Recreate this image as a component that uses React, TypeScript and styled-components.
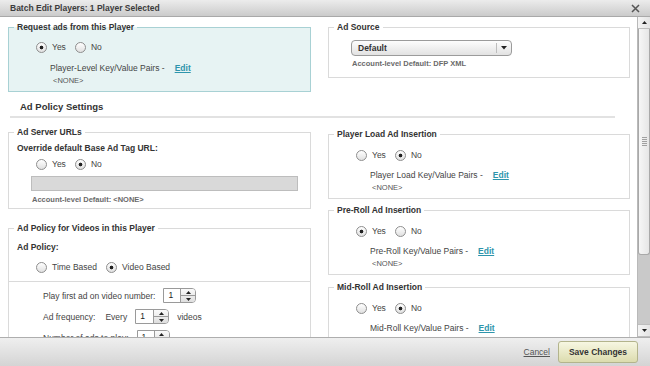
import styled, { createGlobalStyle } from "styled-components";

const GlobalStyle = createGlobalStyle`
  html, body {
    margin: 0;
    padding: 0;
  }
  body {
    font-family: "Liberation Sans", Arial, sans-serif;
    color: #333;
    background: #fff;
    overflow: hidden;
  }
  * {
    box-sizing: border-box;
  }
`;

const Dialog = styled.div`
  width: 650px;
  height: 366px;
  display: flex;
  flex-direction: column;
  overflow: hidden;
`;

const TitleBar = styled.header`
  height: 17px;
  flex: none;
  display: flex;
  align-items: center;
  justify-content: space-between;
  padding: 0 10px 0 10px;
  background: linear-gradient(#ececec, #cbcbcb);
  border-bottom: 1px solid #a9a9a9;
  font-size: 8.5px;
  font-weight: bold;
  color: #3c3c3c;
`;

const Body = styled.div`
  flex: 1;
  display: flex;
  min-height: 0;
`;

const Content = styled.div`
  flex: 1;
  overflow: hidden;
  padding: 5px 7px 0 8px;
`;

const Columns = styled.div`
  display: grid;
  grid-template-columns: 303px 302px;
  column-gap: 17px;
  align-items: start;
`;

const Stack = styled.div<{ $pt?: number }>`
  display: flex;
  flex-direction: column;
  padding-top: ${(p) => p.$pt ?? 0}px;
`;

const Box = styled.fieldset<{ $tint?: boolean; $pb?: number; $mt?: number }>`
  margin: ${(p) => p.$mt ?? 0}px 0 0;
  min-width: 0;
  padding: 0 8px ${(p) => p.$pb ?? 5}px;
  border: 1px solid ${(p) => (p.$tint ? "#a8d1d4" : "#dadada")};
  background: ${(p) => (p.$tint ? "#e7f3f3" : "#fff")};
`;

const Legend = styled.legend`
  margin-left: -3px;
  padding: 0 3px;
  font-size: 8.5px;
  font-weight: bold;
  line-height: 11px;
  color: #333;
`;

const SectionHeading = styled.h2`
  margin: 9px 15px 0 2px;
  padding: 0 0 3px 10px;
  border-bottom: 2px solid #e2e2e2;
  font-size: 9.5px;
  line-height: 12px;
  font-weight: bold;
  color: #333;
`;

const RadioRow = styled.div<{ $mt: number; $indent?: number }>`
  display: flex;
  align-items: center;
  height: 12px;
  margin-top: ${(p) => p.$mt}px;
  padding-left: ${(p) => p.$indent ?? 19}px;
  gap: 9px;
`;

const RadioOption = styled.label`
  display: inline-flex;
  align-items: center;
  gap: 5px;
  font-size: 8.5px;
  color: #444;
`;

const RadioDot = styled.span<{ $on?: boolean }>`
  width: 11px;
  height: 11px;
  border-radius: 50%;
  border: 1px solid #8e8e8e;
  background: ${(p) =>
    p.$on
      ? "radial-gradient(circle, #222 0 1.5px, transparent 2.2px), linear-gradient(#ffffff, #e0e0e0)"
      : "linear-gradient(#ffffff, #e0e0e0)"};
`;

const KvLine = styled.div<{ $mt: number }>`
  margin-top: ${(p) => p.$mt}px;
  padding-left: 33px;
  font-size: 8.5px;
  line-height: 12px;
  color: #444;
`;

const EditLink = styled.a`
  margin-left: 10px;
  font-weight: bold;
  color: #2e95ac;
  text-decoration: underline;
  cursor: pointer;
`;

const NoneText = styled.div<{ $indent?: number }>`
  margin-top: 2px;
  padding-left: ${(p) => p.$indent ?? 36}px;
  font-size: 7.5px;
  line-height: 10px;
  color: #555;
`;

const DefaultNote = styled.div<{ $mt: number }>`
  margin-top: ${(p) => p.$mt}px;
  padding-left: 15px;
  font-size: 7.5px;
  line-height: 10px;
  font-weight: bold;
  color: #6a6a6a;
`;

const FieldLabel = styled.div<{ $mt: number }>`
  margin-top: ${(p) => p.$mt}px;
  font-size: 8.5px;
  line-height: 12px;
  font-weight: bold;
  color: #333;
`;

const Select = styled.div`
  margin: 7px 0 0 14px;
  width: 161px;
  height: 16px;
  display: flex;
  align-items: center;
  padding-left: 6px;
  border: 1px solid #9b9b9b;
  border-radius: 4px;
  background: linear-gradient(#fdfdfd, #e2e2e2);
  font-size: 8.5px;
  font-weight: bold;
  color: #333;
`;

const SelectValue = styled.span`
  flex: 1;
`;

const SelectArrow = styled.span`
  width: 15px;
  height: 10px;
  display: flex;
  align-items: center;
  justify-content: center;
  border-left: 1px solid #bdbdbd;
`;

const UrlInput = styled.div`
  margin: 6px 0 0 14px;
  width: 267px;
  height: 15px;
  background: #d9d9d9;
  border: 1px solid #bdbdbd;
`;

const SubSection = styled.div`
  margin: 8px -9px 0;
  padding: 0 9px 0 35px;
  border-top: 1px solid #dadada;
`;

const ParamRow = styled.div<{ $mt: number }>`
  display: flex;
  align-items: center;
  gap: 8px;
  height: 15px;
  margin-top: ${(p) => p.$mt}px;
  font-size: 8.5px;
  color: #444;
`;

const Spinner = styled.div<{ $w: number }>`
  display: flex;
  width: ${(p) => p.$w}px;
  height: 15px;
  border: 1px solid #9a9a9a;
  border-radius: 0 4px 4px 0;
  background: #fff;
`;

const SpinnerValue = styled.span`
  flex: 1;
  padding-left: 4px;
  font-size: 8.5px;
  line-height: 13px;
  color: #222;
`;

const SpinnerButtons = styled.span`
  width: 15px;
  display: flex;
  flex-direction: column;
  border-left: 1px solid #9a9a9a;
  border-radius: 0 3px 3px 0;
  background: linear-gradient(#fafafa, #dedede);
`;

const SpinnerHalf = styled.span<{ $top?: boolean }>`
  flex: 1;
  display: flex;
  align-items: center;
  justify-content: center;
  border-top: ${(p) => (p.$top ? "none" : "1px solid #9a9a9a")};
`;

const ScrollBar = styled.div`
  width: 13px;
  flex: none;
  display: flex;
  flex-direction: column;
  background: #c9c9c9;
  border-left: 1px solid #b9b9b9;
`;

const ScrollButton = styled.div`
  height: 12px;
  flex: none;
  display: flex;
  align-items: center;
  justify-content: center;
  background: linear-gradient(to right, #f4f4f4, #e4e4e4);
  border-bottom: 1px solid #bdbdbd;
  & + & {
    border-bottom: none;
  }
`;

const ScrollTrack = styled.div`
  flex: 1;
  display: flex;
  flex-direction: column;
  border-bottom: 1px solid #bdbdbd;
`;

const Thumb = styled.div`
  height: 226px;
  display: flex;
  align-items: center;
  justify-content: center;
  background: linear-gradient(to right, #f6f6f6, #e6e6e6);
  border: 1px solid #a9a9a9;
  border-top: none;
  border-radius: 0 0 3px 3px;
`;

const Grip = styled.span`
  width: 5px;
  height: 9px;
  background: repeating-linear-gradient(#a0a0a0 0 1px, transparent 1px 2px);
`;

const Footer = styled.footer`
  height: 29px;
  flex: none;
  display: flex;
  align-items: center;
  justify-content: flex-end;
  gap: 8px;
  padding-right: 12px;
  border-top: 1px solid #aeaeae;
  background: linear-gradient(#efefef, #d4d4d4);
`;

const CancelLink = styled.a`
  font-size: 8.5px;
  color: #555;
  text-decoration: underline;
  cursor: pointer;
`;

const SaveButton = styled.button`
  width: 80px;
  height: 22px;
  padding: 0;
  border: 1px solid #b3b48c;
  border-radius: 3px;
  background: linear-gradient(#f7f7e2, #dcdcae);
  font-family: inherit;
  font-size: 8.5px;
  font-weight: bold;
  color: #333;
`;

const Tri = ({ up, size = 5 }: { up?: boolean; size?: number }) => (
  <svg width={size} height={size * 0.6} viewBox="0 0 10 6">
    <path d={up ? "M0 6 L5 0 L10 6 Z" : "M0 0 L10 0 L5 6 Z"} fill="#222" />
  </svg>
);

type Opt = { label: string; on?: boolean };

const Radios = ({ options, mt, indent }: { options: Opt[]; mt: number; indent?: number }) => (
  <RadioRow $mt={mt} $indent={indent}>
    {options.map((o) => (
      <RadioOption key={o.label}>
        <RadioDot $on={o.on} />
        {o.label}
      </RadioOption>
    ))}
  </RadioRow>
);

const yesNo = (yes: boolean): Opt[] => [
  { label: "Yes", on: yes },
  { label: "No", on: !yes },
];

const NumberSpinner = ({ value, width }: { value: string; width: number }) => (
  <Spinner $w={width}>
    <SpinnerValue>{value}</SpinnerValue>
    <SpinnerButtons>
      <SpinnerHalf $top>
        <Tri up size={5} />
      </SpinnerHalf>
      <SpinnerHalf>
        <Tri size={5} />
      </SpinnerHalf>
    </SpinnerButtons>
  </Spinner>
);

const insertions = [
  { title: "Player Load Ad Insertion", kv: "Player Load Key/Value Pairs -", yes: false, mt: 0 },
  { title: "Pre-Roll Ad Insertion", kv: "Pre-Roll Key/Value Pairs -", yes: true, mt: 6 },
  { title: "Mid-Roll Ad Insertion", kv: "Mid-Roll Key/Value Pairs -", yes: false, mt: 7 },
];

const App = () => {
  return (
    <>
      <GlobalStyle />
      <Dialog>
        <TitleBar>
          <span>Batch Edit Players: 1 Player Selected</span>
          <svg width="9" height="9" viewBox="0 0 9 9">
            <path d="M1 1 L8 8 M8 1 L1 8" stroke="#555" strokeWidth="1.5" />
          </svg>
        </TitleBar>

        <Body>
          <Content>
            <Columns>
              <Box $tint $pb={5}>
                <Legend>Request ads from this Player</Legend>
                <Radios mt={8} options={yesNo(true)} />
                <KvLine $mt={9}>
                  Player-Level Key/Value Pairs -<EditLink>Edit</EditLink>
                </KvLine>
                <NoneText>&lt;NONE&gt;</NoneText>
              </Box>
              <Box $pb={8}>
                <Legend>Ad Source</Legend>
                <Select>
                  <SelectValue>Default</SelectValue>
                  <SelectArrow>
                    <Tri size={6} />
                  </SelectArrow>
                </Select>
                <DefaultNote $mt={3}>Account-level Default: DFP XML</DefaultNote>
              </Box>
            </Columns>

            <SectionHeading>Ad Policy Settings</SectionHeading>

            <Columns style={{ marginTop: 9 }}>
              <Stack>
                <Box $pb={3}>
                  <Legend>Ad Server URLs</Legend>
                  <FieldLabel $mt={4}>Override default Base Ad Tag URL:</FieldLabel>
                  <Radios mt={4} options={yesNo(false)} />
                  <UrlInput />
                  <DefaultNote $mt={4}>Account-level Default: &lt;NONE&gt;</DefaultNote>
                </Box>
                <Box $mt={14} $pb={10}>
                  <Legend>Ad Policy for Videos in this Player</Legend>
                  <FieldLabel $mt={7}>Ad Policy:</FieldLabel>
                  <Radios
                    mt={8}
                    options={[
                      { label: "Time Based" },
                      { label: "Video Based", on: true },
                    ]}
                  />
                  <SubSection>
                    <ParamRow $mt={6}>
                      Play first ad on video number:
                      <NumberSpinner value="1" width={33} />
                    </ParamRow>
                    <ParamRow $mt={6}>
                      <span style={{ marginRight: 2 }}>Ad frequency:</span>
                      Every
                      <NumberSpinner value="1" width={34} />
                      videos
                    </ParamRow>
                    <ParamRow $mt={6}>
                      Number of ads to play:
                      <NumberSpinner value="1" width={33} />
                    </ParamRow>
                  </SubSection>
                </Box>
              </Stack>

              <Stack $pt={2}>
                {insertions.map((ins) => (
                  <Box key={ins.title} $mt={ins.mt} $pb={5}>
                    <Legend>{ins.title}</Legend>
                    <Radios mt={9} options={yesNo(ins.yes)} />
                    <KvLine $mt={8}>
                      {ins.kv}
                      <EditLink>Edit</EditLink>
                    </KvLine>
                    <NoneText $indent={35}>&lt;NONE&gt;</NoneText>
                  </Box>
                ))}
              </Stack>
            </Columns>
          </Content>

          <ScrollBar>
            <ScrollButton>
              <Tri up size={5} />
            </ScrollButton>
            <ScrollTrack>
              <Thumb>
                <Grip />
              </Thumb>
            </ScrollTrack>
            <ScrollButton>
              <Tri size={5} />
            </ScrollButton>
          </ScrollBar>
        </Body>

        <Footer>
          <CancelLink>Cancel</CancelLink>
          <SaveButton type="button">Save Changes</SaveButton>
        </Footer>
      </Dialog>
    </>
  );
};

export default App;
